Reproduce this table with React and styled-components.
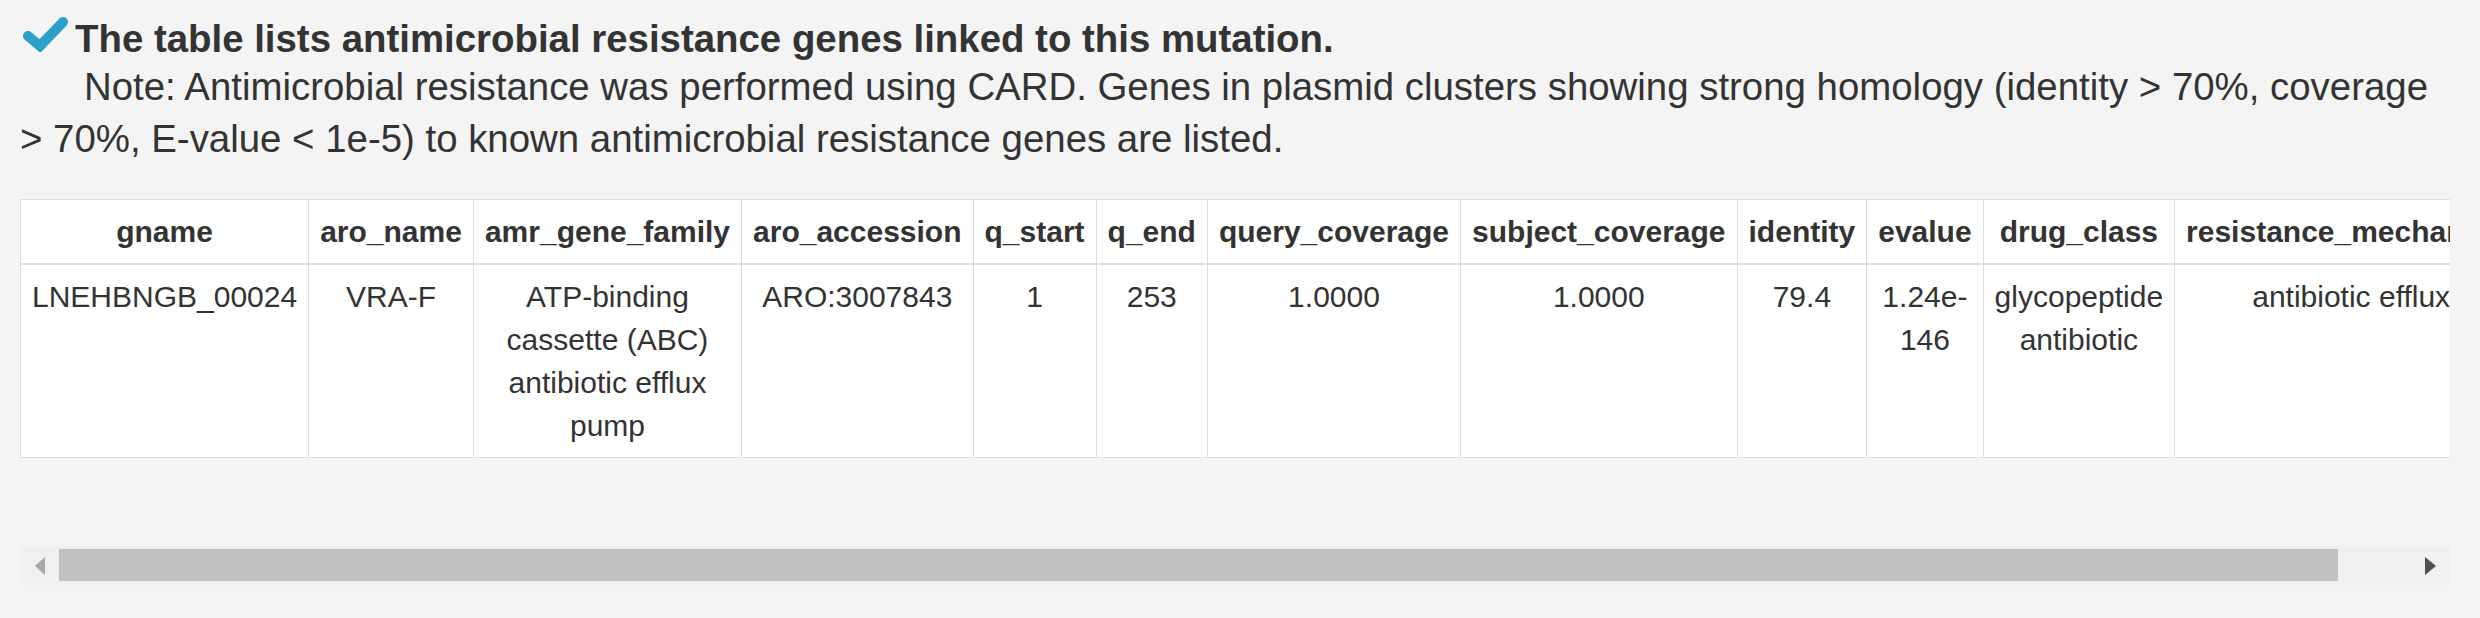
import React, { useLayoutEffect, useRef, useState } from "react";
import styled, { createGlobalStyle } from "styled-components";

const GlobalStyle = createGlobalStyle`
  html, body {
    margin: 0;
    padding: 0;
    background: #f4f4f4;
  }
  body {
    font-family: "Liberation Sans", Arial, Helvetica, sans-serif;
    color: #333;
  }
`;

const Page = styled.div`
  padding: 17px 30px 0 20px;
`;

const Title = styled.div`
  display: flex;
  align-items: flex-start;
  gap: 7px;
  font-size: 38.4px;
  line-height: 44px;
  font-weight: bold;
  color: #333;
`;

const Check = styled.svg`
  flex: none;
  width: 45px;
  height: 35px;
  margin-left: 3px;
`;

const Note = styled.p`
  margin: 0;
  font-size: 38.4px;
  line-height: 52px;
  text-indent: 64px;
`;

const Scroller = styled.div`
  margin-top: 34px;
  overflow: hidden;
`;

const Table = styled.table`
  width: 100%;
  margin-bottom: 88px;
  border-collapse: collapse;
  background: #fff;
  border: 1px solid #ddd;
  font-size: 30px;
  line-height: 43px;
`;

const Th = styled.th`
  padding: 10px 11px;
  text-align: center;
  vertical-align: bottom;
  font-weight: bold;
  border: 1px solid #ddd;
  border-bottom: 2px solid #ddd;
`;

const Td = styled.td`
  padding: 10px 11px;
  text-align: center;
  vertical-align: top;
  border: 1px solid #ddd;
`;

const ScrollBar = styled.div`
  display: flex;
  height: 39px;
  background: #f0f0f0;
`;

const ArrowButton = styled.div`
  flex: none;
  width: 39px;
  display: flex;
  align-items: center;
  justify-content: center;
`;

const Arrow = styled.span`
  width: 0;
  height: 0;
  border-top: 9px solid transparent;
  border-bottom: 9px solid transparent;
  ${p =>
    p.$dir === "left"
      ? `border-right: 10px solid ${p.$disabled ? "#a8a8a8" : "#505050"};`
      : `border-left: 11px solid ${p.$disabled ? "#a8a8a8" : "#505050"};`}
`;

const Track = styled.div`
  flex: 1;
  display: flex;
  align-items: flex-start;
  padding-top: 3px;
`;

const Thumb = styled.div`
  height: 32px;
  background: #c1c1c1;
`;

const columns = [
  "gname",
  "aro_name",
  "amr_gene_family",
  "aro_accession",
  "q_start",
  "q_end",
  "query_coverage",
  "subject_coverage",
  "identity",
  "evalue",
  "drug_class",
  "resistance_mechanism"
];

const rows = [
  [
    "LNEHBNGB_00024",
    "VRA-F",
    "ATP-binding cassette (ABC) antibiotic efflux pump",
    "ARO:3007843",
    "1",
    "253",
    "1.0000",
    "1.0000",
    "79.4",
    "1.24e-146",
    "glycopeptide antibiotic",
    "antibiotic efflux"
  ]
];

const App = () => {
  const scrollRef = useRef(null);
  const [thumb, setThumb] = useState(97);

  useLayoutEffect(() => {
    const el = scrollRef.current;
    if (el && el.scrollWidth > 0) {
      setThumb((el.clientWidth / el.scrollWidth) * 100);
    }
  }, []);

  return (
    <Page>
      <GlobalStyle />
      <Title>
        <Check viewBox="0 0 45 35">
          <polyline
            points="5,19 17,29 40,5"
            fill="none"
            stroke="#2ba0c9"
            strokeWidth="10"
            strokeLinecap="round"
            strokeLinejoin="miter"
          />
        </Check>
        The table lists antimicrobial resistance genes linked to this mutation.
      </Title>
      <Note>
        Note: Antimicrobial resistance was performed using CARD. Genes in plasmid
        clusters showing strong homology (identity &gt; 70%, coverage &gt; 70%,
        E-value &lt; 1e-5) to known antimicrobial resistance genes are listed.
      </Note>
      <Scroller ref={scrollRef}>
        <Table>
          <thead>
            <tr>
              {columns.map(c => (
                <Th key={c}>{c}</Th>
              ))}
            </tr>
          </thead>
          <tbody>
            {rows.map((r, i) => (
              <tr key={i}>
                {r.map((v, j) => (
                  <Td key={j}>{v}</Td>
                ))}
              </tr>
            ))}
          </tbody>
        </Table>
      </Scroller>
      <ScrollBar>
        <ArrowButton>
          <Arrow $dir="left" $disabled />
        </ArrowButton>
        <Track>
          <Thumb style={{ width: `${thumb}%` }} />
        </Track>
        <ArrowButton>
          <Arrow $dir="right" />
        </ArrowButton>
      </ScrollBar>
    </Page>
  );
};

export default App;
